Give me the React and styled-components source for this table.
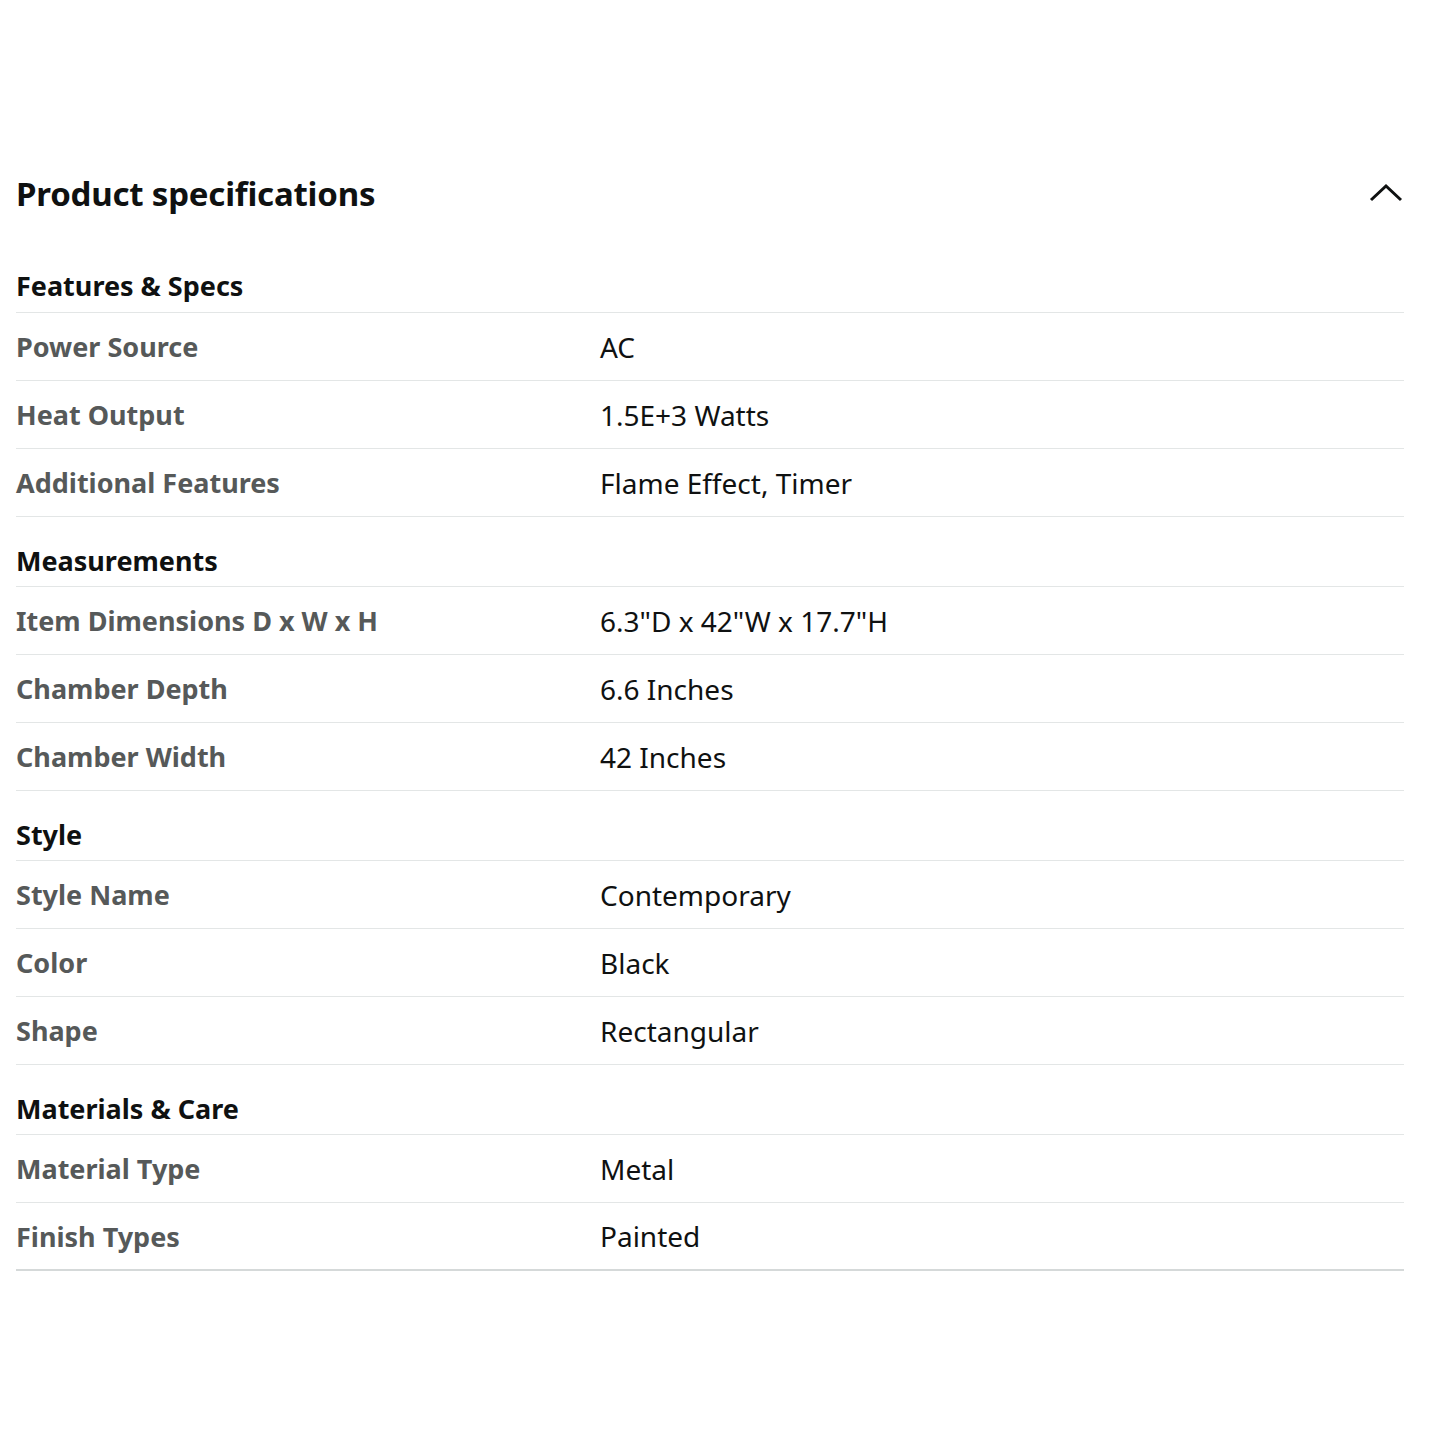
import styled, { createGlobalStyle } from "styled-components";

const GlobalStyle = createGlobalStyle`
  body {
    margin: 0;
    background: #fff;
    font-family: "Noto Sans", "Open Sans", sans-serif;
    color: #0f1111;
  }
`;

const sections = [
  {
    title: "Features & Specs",
    rows: [
      ["Power Source", "AC"],
      ["Heat Output", "1.5E+3 Watts"],
      ["Additional Features", "Flame Effect, Timer"],
    ],
  },
  {
    title: "Measurements",
    rows: [
      ["Item Dimensions D x W x H", '6.3"D x 42"W x 17.7"H'],
      ["Chamber Depth", "6.6 Inches"],
      ["Chamber Width", "42 Inches"],
    ],
  },
  {
    title: "Style",
    rows: [
      ["Style Name", "Contemporary"],
      ["Color", "Black"],
      ["Shape", "Rectangular"],
    ],
  },
  {
    title: "Materials & Care",
    rows: [
      ["Material Type", "Metal"],
      ["Finish Types", "Painted"],
    ],
  },
];

const Page = styled.div`
  padding: 160px 26px 0 16px;
`;

const Header = styled.div`
  display: flex;
  align-items: center;
  justify-content: space-between;
  height: 66px;
  margin-bottom: 46px;
`;

const Title = styled.h2`
  margin: 0;
  font-size: 33px;
  font-weight: 700;
  letter-spacing: -0.2px;
`;

const Toggle = styled.button`
  border: 0;
  background: none;
  padding: 0;
  display: flex;
  cursor: pointer;
`;

const SectionTitle = styled.div`
  font-size: 27px;
  font-weight: 700;
  line-height: 1;
  height: ${(p) => (p.$first ? "auto" : "70px")};
  box-sizing: border-box;
  display: flex;
  align-items: flex-end;
  padding-bottom: ${(p) => (p.$first ? "13px" : "12px")};
  border-bottom: 1px solid #e3e6e6;
`;

const Row = styled.div`
  display: grid;
  grid-template-columns: 584px 1fr;
  align-items: center;
  height: 68px;
  box-sizing: border-box;
  border-bottom: ${(p) => (p.$last ? "2px solid #d5d9d9" : "1px solid #e3e6e6")};
`;

const Label = styled.span`
  font-size: 27px;
  font-weight: 700;
  color: #565959;
`;

const Value = styled.span`
  font-size: 28px;
  color: #0f1111;
`;

export default function App() {
  return (
    <>
      <GlobalStyle />
      <Page>
        <Header>
          <Title>Product specifications</Title>
          <Toggle aria-label="Collapse">
            <svg width="36" height="36" viewBox="0 0 36 36" fill="none">
              <path
                d="M3 25 L18 11 L33 25"
                stroke="#0f1111"
                strokeWidth="3"
                strokeLinecap="butt"
              />
            </svg>
          </Toggle>
        </Header>
        {sections.map((s, si) => (
          <div key={s.title}>
            <SectionTitle $first={si === 0}>{s.title}</SectionTitle>
            {s.rows.map(([k, v], ri) => (
              <Row
                key={k}
                $last={si === sections.length - 1 && ri === s.rows.length - 1}
              >
                <Label>{k}</Label>
                <Value>{v}</Value>
              </Row>
            ))}
          </div>
        ))}
      </Page>
    </>
  );
}
